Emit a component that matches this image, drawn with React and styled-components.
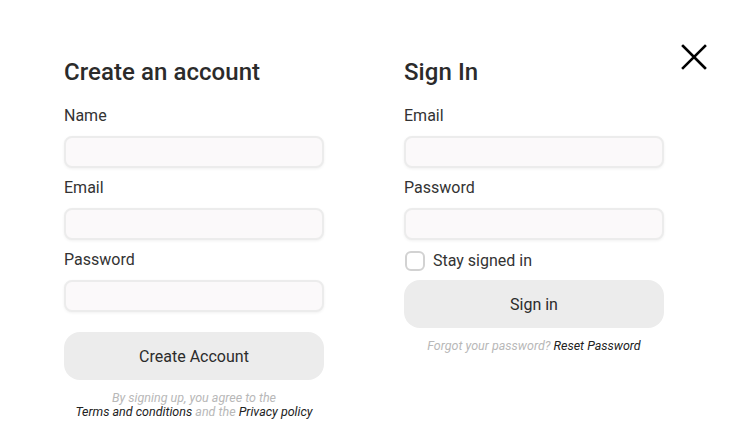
import styled, { createGlobalStyle } from 'styled-components';

const GlobalStyle = createGlobalStyle`
  body {
    margin: 0;
    background: #ffffff;
    font-family: Roboto, "Liberation Sans", sans-serif;
    color: #2b2b2b;
  }
`;

function Field({ label, type = 'text' }) {
  return (
    <FieldWrap>
      <Label>{label}</Label>
      <Input type={type} />
    </FieldWrap>
  );
}

function App() {
  return (
    <Page>
      <GlobalStyle />
      <CloseButton aria-label="Close">
        <svg width="26" height="26" viewBox="0 0 26 26">
          <path d="M2 2 L24 24 M24 2 L2 24" stroke="#000" strokeWidth="2.6" strokeLinecap="square" />
        </svg>
      </CloseButton>
      <Columns>
        <Column>
          <Title>Create an account</Title>
          <Field label="Name" />
          <Field label="Email" />
          <Field label="Password" type="password" />
          <PrimaryButton $top={20}>Create Account</PrimaryButton>
          <Note $top={11}>
            By signing up, you agree to the
            <br />
            <Strong>Terms and conditions</Strong> and the <Strong>Privacy policy</Strong>
          </Note>
        </Column>
        <Column>
          <Title>Sign In</Title>
          <Field label="Email" />
          <Field label="Password" type="password" />
          <CheckRow>
            <Check />
            <span>Stay signed in</span>
          </CheckRow>
          <PrimaryButton $top={9}>Sign in</PrimaryButton>
          <Note $top={11}>
            Forgot your password? <Strong>Reset Password</Strong>
          </Note>
        </Column>
      </Columns>
    </Page>
  );
}

export default App;

const Page = styled.div`
  position: relative;
  width: 735px;
  height: 444px;
  padding: 58px 0 0 64px;
  box-sizing: border-box;
`;

const CloseButton = styled.button`
  position: absolute;
  top: 44px;
  left: 681px;
  padding: 0;
  border: none;
  background: none;
  line-height: 0;
  cursor: pointer;
`;

const Columns = styled.div`
  display: flex;
  gap: 80px;
`;

const Column = styled.div`
  width: 260px;
  display: flex;
  flex-direction: column;
`;

const Title = styled.h2`
  margin: 0 0 20px;
  font-size: 24px;
  line-height: 28px;
  font-weight: 500;
  letter-spacing: 0.06px;
  color: #2b2b2b;
`;

const FieldWrap = styled.div`
  display: flex;
  flex-direction: column;

  & + & {
    margin-top: 10px;
  }
`;

const Label = styled.label`
  font-size: 16px;
  line-height: 20px;
  margin-bottom: 10px;
  color: #333;
`;

const Input = styled.input`
  box-sizing: border-box;
  height: 32px;
  width: 100%;
  border: 2px solid #ececec;
  border-radius: 8px;
  background: #fbf9fa;
  box-shadow: 0 1px 3px rgba(0, 0, 0, 0.06);
  outline: none;
`;

const CheckRow = styled.label`
  display: flex;
  align-items: center;
  gap: 8px;
  margin-top: 11px;
  margin-left: 1px;
  font-size: 16px;
  line-height: 20px;
  color: #333;
`;

const Check = styled.span`
  box-sizing: border-box;
  width: 20px;
  height: 20px;
  border: 2px solid #d2d2d2;
  border-radius: 6px;
  background: #fff;
`;

const PrimaryButton = styled.button`
  margin-top: ${(p) => p.$top}px;
  height: 48px;
  width: 100%;
  border: none;
  border-radius: 16px;
  background: #ececec;
  font-family: Roboto, "Liberation Sans", sans-serif;
  font-size: 16px;
  color: #2b2b2b;
`;

const Note = styled.p`
  margin: ${(p) => p.$top}px 0 0;
  text-align: center;
  font-size: 12.5px;
  line-height: 14px;
  font-style: italic;
  color: #b8b8b8;
`;

const Strong = styled.span`
  color: #222;
`;
